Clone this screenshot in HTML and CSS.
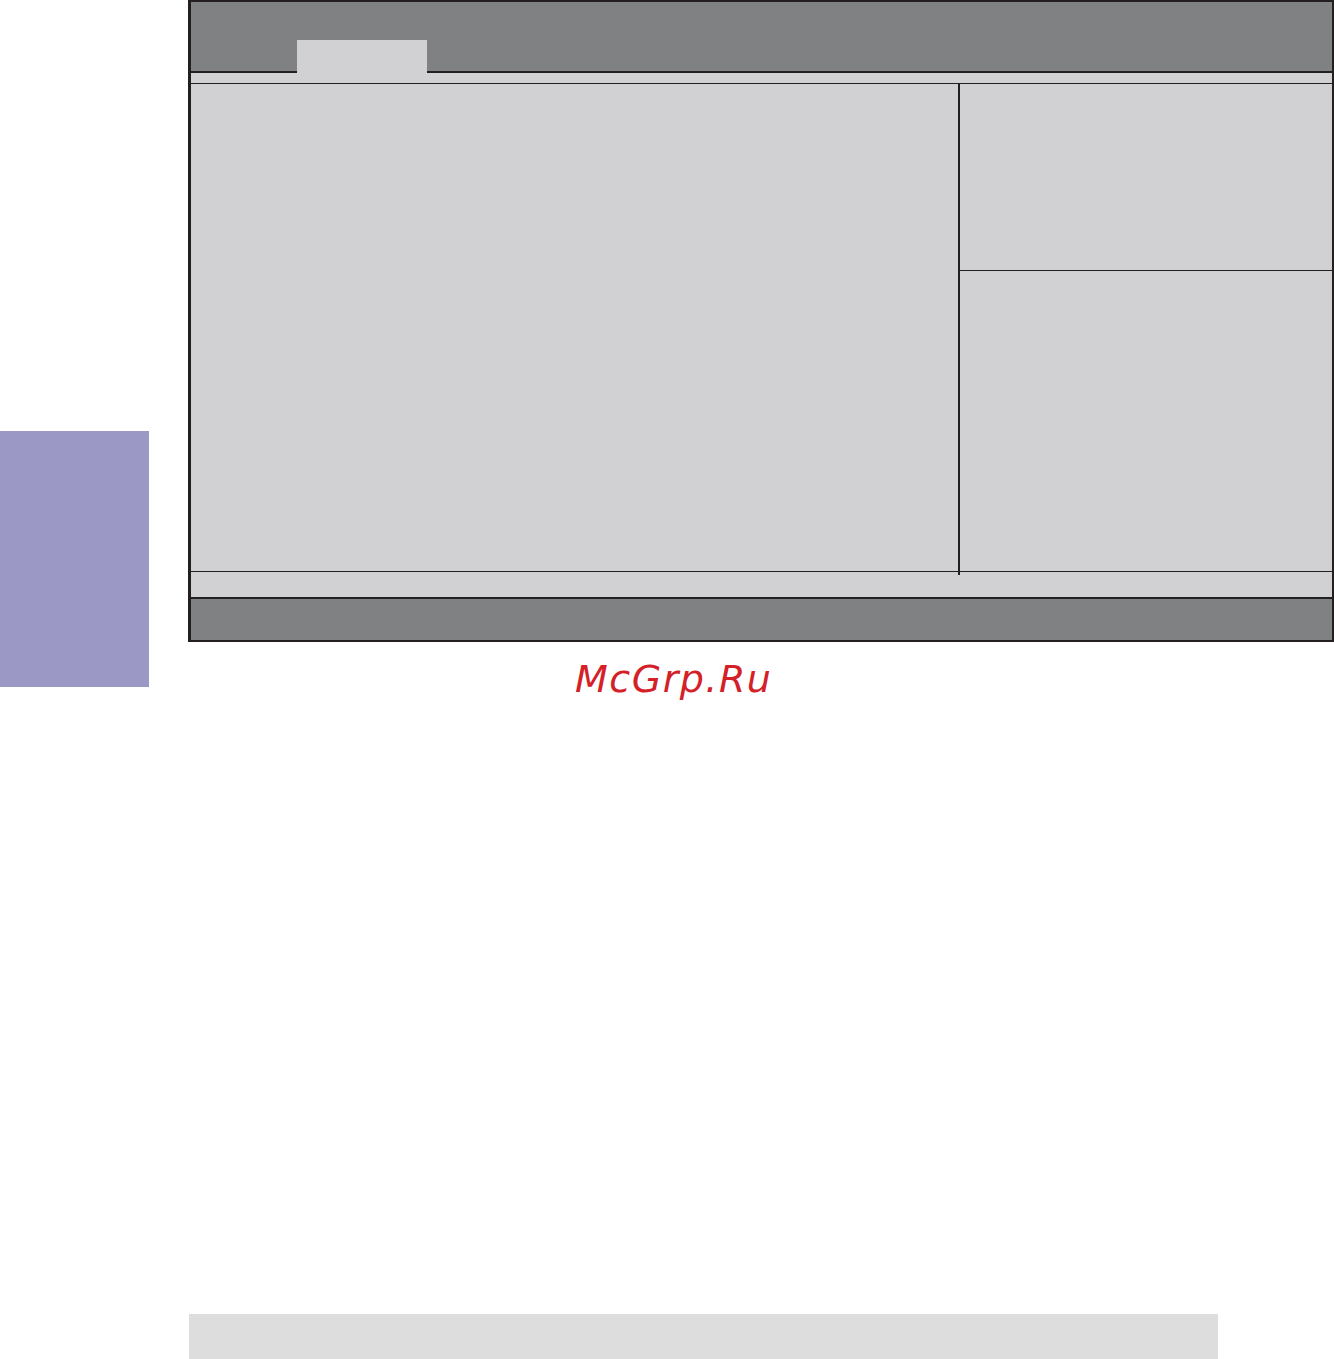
FILE: index.html
```html
<!DOCTYPE html>
<html>
<head>
<meta charset="utf-8">
<link rel="stylesheet" href="styles.css">
</head>
<body>
<div class="page">
  <aside class="side">
    <div class="side-block"></div>
  </aside>
  <div class="content">
    <div class="bios">
      <div class="bios-header">
        <div class="bios-tab"></div>
      </div>
      <div class="bios-strip"></div>
      <div class="bios-main">
        <div class="bios-left"></div>
        <div class="bios-right">
          <div class="bios-help-top"></div>
          <div class="bios-help-bottom"></div>
        </div>
      </div>
      <div class="bios-status"></div>
      <div class="bios-footer"></div>
    </div>
    <div class="watermark">McGrp.Ru</div>
    <div class="page-footer"></div>
  </div>
</div>
</body>
</html>
```

FILE: styles.css
```css
html, body {
  margin: 0;
  padding: 0;
  background: #ffffff;
}

.page {
  display: flex;
  width: 1334px;
  height: 1359px;
  overflow: hidden;
}

.side {
  width: 149px;
  flex: none;
  padding-top: 431px;
}

.side-block {
  height: 256px;
  background: #9b98c6;
}

.content {
  margin-left: 39px;
  width: 1146px;
  display: flex;
  flex-direction: column;
}

.bios {
  box-sizing: border-box;
  width: 1146px;
  height: 642px;
  border-style: solid;
  border-color: #231f20;
  border-width: 2px 2px 2px 3px;
  background: #d1d1d3;
  display: flex;
  flex-direction: column;
}

.bios-header {
  height: 69px;
  background: #808183;
  border-bottom: 2px solid #231f20;
  display: flex;
  align-items: flex-end;
  padding-left: 106px;
}

.bios-tab {
  width: 130px;
  height: 33px;
  margin-bottom: -2px;
  background: #d1d1d3;
}

.bios-strip {
  height: 10px;
  border-bottom: 1px solid #231f20;
}

.bios-main {
  height: 487px;
  display: flex;
  border-bottom: 1px solid #231f20;
}

.bios-left {
  width: 767px;
  flex: none;
  border-right: 2px solid #231f20;
  position: relative;
}

.bios-left::after {
  content: "";
  position: absolute;
  right: -2px;
  bottom: -4px;
  width: 2px;
  height: 4px;
  background: #231f20;
}

.bios-right {
  flex: 1;
  display: flex;
  flex-direction: column;
}

.bios-help-top {
  height: 186px;
  border-bottom: 1px solid #231f20;
}

.bios-help-bottom {
  flex: 1;
}

.bios-status {
  height: 25px;
  border-bottom: 2px solid #231f20;
}

.bios-footer {
  flex: 1;
  background: #808183;
}

.watermark {
  margin-top: 16px;
  padding-left: 387px;
  font-family: "DejaVu Sans", sans-serif;
  font-style: italic;
  font-size: 38px;
  line-height: 42px;
  letter-spacing: 1.5px;
  color: #d42027;
}

.page-footer {
  margin-top: auto;
  margin-left: 1px;
  width: 1029px;
  height: 45px;
  background: #dcdddc;
}
```
